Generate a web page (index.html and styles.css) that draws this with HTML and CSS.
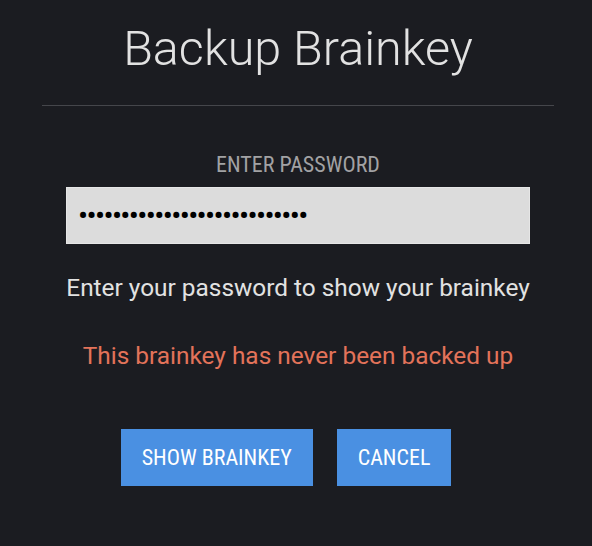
FILE: index.html
```html
<!DOCTYPE html>
<html lang="en">
<head>
<meta charset="utf-8">
<title>Backup Brainkey</title>
<link rel="stylesheet" href="styles.css">
</head>
<body>
<div class="modal">
  <h1 class="title">Backup Brainkey</h1>
  <hr class="divider">
  <form class="form">
    <label class="label" for="pw">ENTER PASSWORD</label>
    <input class="password" id="pw" type="password" value="abcdefghijklmnopqrstuvwxyza">
    <p class="hint">Enter your password to show your brainkey</p>
    <p class="warning">This brainkey has never been backed up</p>
    <div class="actions">
      <button type="button" class="btn">SHOW BRAINKEY</button>
      <button type="button" class="btn">CANCEL</button>
    </div>
  </form>
</div>
</body>
</html>
```

FILE: styles.css
```css
html, body {
  margin: 0;
  padding: 0;
  background: #1b1c21;
}
body {
  font-family: Roboto, "Noto Sans", sans-serif;
  height: 546px;
  overflow: hidden;
}
.modal {
  width: 512px;
  margin-left: 42px;
  padding-top: 21px;
}
.title {
  margin: 0;
  font-size: 48.5px;
  line-height: 56px;
  font-weight: 300;
  color: #e2e2e2;
  text-align: center;
}
.divider {
  margin: 28px 0 0 0;
  border: 0;
  height: 1px;
  background: #45464b;
}
.form {
  margin: 46px 24px 0 24px;
  display: flex;
  flex-direction: column;
  align-items: center;
}
.label {
  font-family: "Roboto Condensed", Roboto, sans-serif;
  font-stretch: condensed;
  font-size: 22px;
  line-height: 26px;
  color: #a2a2a4;
}
.password {
  margin-top: 9px;
  box-sizing: border-box;
  width: 100%;
  height: 57px;
  padding: 0 12px 0 11px;
  border: 1px solid #e6e6e6;
  border-radius: 0;
  background: #dcdcdc;
  font-family: Roboto, sans-serif;
  font-size: 30px;
  letter-spacing: -1.65px;
  color: #000;
  outline: none;
}
.hint {
  margin: 30px 0 0 0;
  font-size: 24.4px;
  line-height: 28px;
  color: #e2e2e2;
  text-align: center;
}
.warning {
  margin: 40px 0 0 0;
  font-size: 24.4px;
  line-height: 28px;
  color: #e3735a;
  text-align: center;
}
.actions {
  margin-top: 59px;
  display: flex;
  gap: 24px;
  padding-right: 24px;
}
.btn {
  height: 57px;
  padding: 0 21px;
  border: 0;
  border-radius: 0;
  background: #4a90e2;
  color: #ffffff;
  font-family: "Roboto Condensed", Roboto, sans-serif;
  font-stretch: condensed;
  font-size: 22px;
  line-height: 26px;
}
```
